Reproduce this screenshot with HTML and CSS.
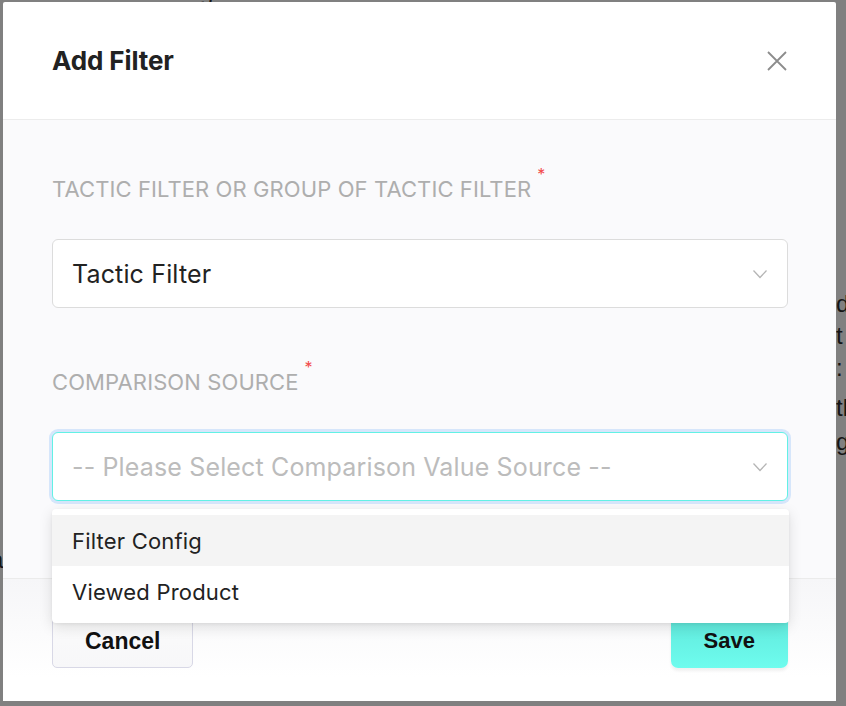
FILE: index.html
```html
<!DOCTYPE html>
<html>
<head>
<meta charset="utf-8">
<link rel="stylesheet" href="styles.css">
</head>
<body>
<div class="page">
  <div class="bg-top">the slots within widgets</div>
  <div class="bg-right">
    <span class="r1">d</span>
    <span class="r2">t</span>
    <span class="r3">: .</span>
    <span class="r4">th</span>
    <span class="r5">g</span>
  </div>
  <div class="bg-left">a</div>
</div>

<div class="modal">
  <div class="modal-header">
    <h2 class="modal-title">Add Filter</h2>
    <svg class="close" width="20" height="20" viewBox="0 0 20 20"><path d="M1 1 L19 19 M19 1 L1 19" stroke="#8c8c8c" stroke-width="1.8" fill="none"/></svg>
  </div>
  <div class="modal-body">
    <div class="field">
      <label class="label">TACTIC FILTER OR GROUP OF TACTIC FILTER<span class="req">*</span></label>
      <div class="select">
        <span class="value">Tactic Filter</span>
        <svg class="chev" width="16" height="10" viewBox="0 0 16 10"><path d="M1.5 1.5 L8 8.5 L14.5 1.5" stroke="#b5b5b5" stroke-width="1.3" fill="none"/></svg>
      </div>
    </div>
    <div class="field second">
      <label class="label">COMPARISON SOURCE<span class="req">*</span></label>
      <div class="select focus">
        <span class="value placeholder">-- Please Select Comparison Value Source --</span>
        <svg class="chev" width="16" height="10" viewBox="0 0 16 10"><path d="M1.5 1.5 L8 8.5 L14.5 1.5" stroke="#b5b5b5" stroke-width="1.3" fill="none"/></svg>
      </div>
    </div>
  </div>
  <div class="modal-footer">
    <button class="btn cancel">Cancel</button>
    <button class="btn save">Save</button>
  </div>
  <ul class="menu">
    <li class="item active">Filter Config</li>
    <li class="item">Viewed Product</li>
  </ul>
</div>
</body>
</html>
```

FILE: styles.css
```css
html, body {
  margin: 0;
  padding: 0;
}
body {
  width: 846px;
  height: 706px;
  background: #808080;
  position: relative;
  overflow: hidden;
  font-family: Inter, "Liberation Sans", sans-serif;
}
.page {
  color: #151515;
  font-family: "Liberation Sans", Arial, sans-serif;
  font-size: 24px;
}
.bg-top {
  position: absolute;
  left: 0;
  top: -22px;
  font-size: 24px;
}
.bg-right span {
  position: absolute;
  left: 836px;
}
.bg-right .r1 { top: 290px; }
.bg-right .r2 { top: 322px; }
.bg-right .r3 { top: 354px; }
.bg-right .r4 { top: 394px; }
.bg-right .r5 { top: 428px; }
.bg-left {
  position: absolute;
  left: -10px;
  top: 546px;
}

.modal {
  position: absolute;
  left: 3px;
  top: 2px;
  width: 833px;
  height: 699px;
  background: #fff;
  border-radius: 2px 2px 4px 4px;
  display: flex;
  flex-direction: column;
}
.modal-header {
  height: 117px;
  flex: none;
  border-bottom: 1px solid #ececec;
  display: flex;
  align-items: center;
  justify-content: space-between;
  padding: 0 49px 0 49px;
}
.modal-title {
  margin: 0;
  font-size: 26px;
  font-weight: 700;
  color: #222;
  letter-spacing: -0.1px;
}
.modal-body {
  background: #fafafc;
  height: 458px;
  flex: none;
  box-sizing: border-box;
  padding: 57px 48px 0 49px;
}
.label {
  display: block;
  font-size: 22px;
  line-height: 24px;
  color: #aeaeae;
  letter-spacing: 0.1px;
}
.req {
  color: #f24b4b;
  font-size: 16px;
  position: relative;
  top: -17px;
  margin-left: 6px;
}
.select {
  margin-top: 36px;
  height: 69px;
  box-sizing: border-box;
  background: #fff;
  border: 1px solid #dcdcdc;
  border-radius: 6px;
  display: flex;
  align-items: center;
  justify-content: space-between;
  padding: 0 19px 0 19px;
}
.value {
  font-size: 25px;
  color: #222;
  letter-spacing: 0.15px;
}
.placeholder {
  color: #bcbcbc;
}
.field.second {
  margin-top: 62px;
}
.select.focus {
  border: 1px solid #62f1e5;
  box-shadow: 0 0 0 3px #d6e6fb;
}
.modal-footer {
  flex: 1;
  border-top: 1px solid #ebebeb;
  background: linear-gradient(#f6f6f8, #ffffff 80%);
  display: flex;
  justify-content: space-between;
  align-items: flex-start;
  padding: 35px 48px 0 49px;
}
.btn {
  height: 54px;
  padding: 0 33px;
  font-family: "Liberation Sans", Arial, sans-serif;
  font-weight: 700;
  font-size: 22px;
  color: #111;
  border-radius: 5px;
  cursor: pointer;
}
.cancel {
  background: linear-gradient(#fbfbfb, #f7f7f9);
  border: 1px solid #d8d8e6;
  font-size: 23px;
  padding: 0 32px;
}
.save {
  border: none;
  background: linear-gradient(#5fe7da, #6efcee);
  box-shadow: 0 3px 3px rgba(0,0,0,0.06);
  border-radius: 7px;
}
.menu {
  position: absolute;
  left: 49px;
  top: 507px;
  width: 737px;
  margin: 0;
  padding: 6px 0;
  list-style: none;
  background: #fff;
  border-radius: 4px;
  box-shadow: 0 4px 14px rgba(0,0,0,0.12), 0 1px 3px rgba(0,0,0,0.06);
}
.item {
  height: 51px;
  display: flex;
  align-items: center;
  padding-left: 20px;
  font-size: 22px;
  color: #222;
  letter-spacing: 0.2px;
}
.item.active {
  background: #f4f4f4;
}
```
